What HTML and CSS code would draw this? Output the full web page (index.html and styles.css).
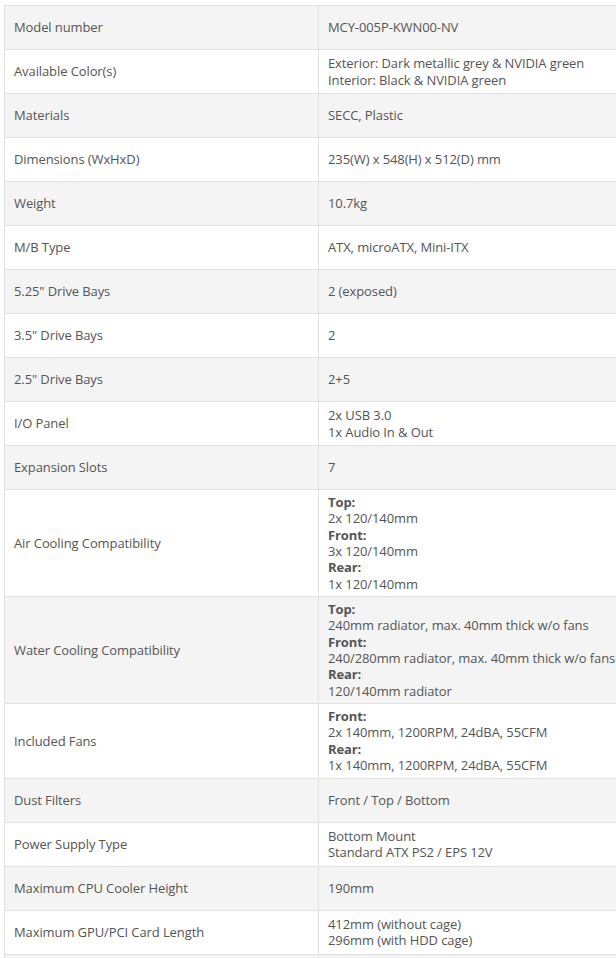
FILE: index.html
```html
<!DOCTYPE html>
<html>
<head>
<meta charset="utf-8">
<link rel="stylesheet" href="styles.css">
</head>
<body>
<div class="wrap">
<table class="specs">
<tbody>
<tr><td class="k">Model number</td><td class="v">MCY-005P-KWN00-NV</td></tr>
<tr><td class="k">Available Color(s)</td><td class="v">Exterior: Dark metallic grey &amp; NVIDIA green<br>Interior: Black &amp; NVIDIA green</td></tr>
<tr><td class="k">Materials</td><td class="v">SECC, Plastic</td></tr>
<tr><td class="k">Dimensions (WxHxD)</td><td class="v">235(W) x 548(H) x 512(D) mm</td></tr>
<tr><td class="k">Weight</td><td class="v">10.7kg</td></tr>
<tr><td class="k">M/B Type</td><td class="v">ATX, microATX, Mini-ITX</td></tr>
<tr><td class="k">5.25" Drive Bays</td><td class="v">2 (exposed)</td></tr>
<tr><td class="k">3.5" Drive Bays</td><td class="v">2</td></tr>
<tr><td class="k">2.5" Drive Bays</td><td class="v">2+5</td></tr>
<tr><td class="k">I/O Panel</td><td class="v">2x USB 3.0<br>1x Audio In &amp; Out</td></tr>
<tr><td class="k">Expansion Slots</td><td class="v">7</td></tr>
<tr><td class="k">Air Cooling Compatibility</td><td class="v"><b>Top:</b><br>2x 120/140mm<br><b>Front:</b><br>3x 120/140mm<br><b>Rear:</b><br>1x 120/140mm</td></tr>
<tr><td class="k">Water Cooling Compatibility</td><td class="v"><b>Top:</b><br>240mm radiator, max. 40mm thick w/o fans<br><b>Front:</b><br>240/280mm radiator, max. 40mm thick w/o fans<br><b>Rear:</b><br>120/140mm radiator</td></tr>
<tr><td class="k">Included Fans</td><td class="v"><b>Front:</b><br>2x 140mm, 1200RPM, 24dBA, 55CFM<br><b>Rear:</b><br>1x 140mm, 1200RPM, 24dBA, 55CFM</td></tr>
<tr><td class="k">Dust Filters</td><td class="v">Front / Top / Bottom</td></tr>
<tr><td class="k">Power Supply Type</td><td class="v">Bottom Mount<br>Standard ATX PS2 / EPS 12V</td></tr>
<tr><td class="k">Maximum CPU Cooler Height</td><td class="v">190mm</td></tr>
<tr><td class="k">Maximum GPU/PCI Card Length</td><td class="v">412mm (without cage)<br>296mm (with HDD cage)</td></tr>
<tr><td class="k"></td><td class="v"></td></tr>
</tbody>
</table>
</div>
</body>
</html>
```
FILE: styles.css
```css
html, body {
  margin: 0;
  padding: 0;
  background: #ffffff;
}
.wrap {
  overflow: hidden;
  padding: 5px 0 0 4px;
  height: 953px;
}
.specs {
  border-collapse: collapse;
  width: 640px;
  table-layout: fixed;
  font-family: "Open Sans", "Noto Sans", sans-serif;
  font-size: 13px;
  line-height: 16.35px;
  letter-spacing: -0.1px;
  color: #555555;
}
.specs td {
  border: 1px solid #e2e2e2;
  padding: 4px 9px;
  height: 35px;
  vertical-align: middle;
  text-align: left;
  white-space: nowrap;
}
.specs td.k {
  width: 295px;
}
.specs tr:nth-child(odd) td {
  background: #f4f4f4;
}
.specs b {
  font-weight: 700;
  color: #555555;
}
```
